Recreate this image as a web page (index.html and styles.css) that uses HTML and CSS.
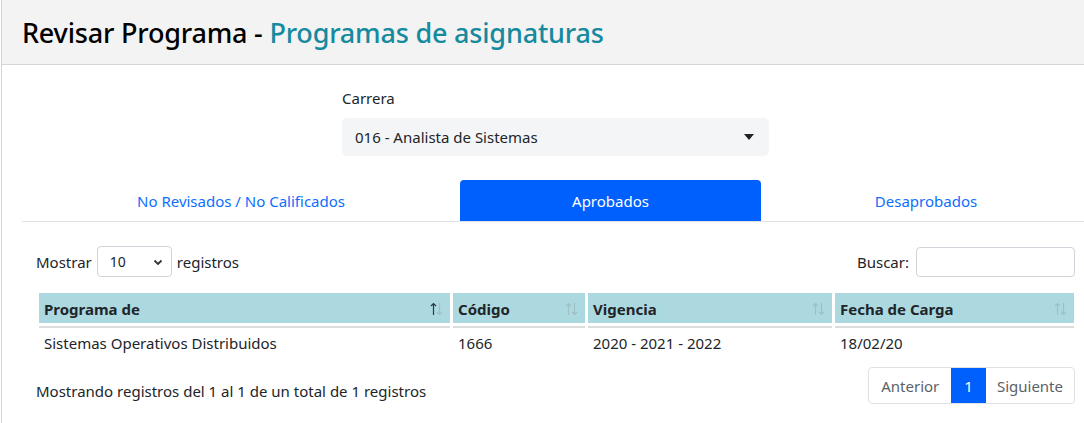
FILE: index.html
```html
<!DOCTYPE html>
<html lang="es">
<head>
<meta charset="utf-8">
<title>Revisar Programa</title>
<link rel="stylesheet" href="styles.css">
</head>
<body>
<div class="card">
  <div class="card-header">
    <h3 class="title">Revisar Programa - <span class="subtitle">Programas de asignaturas</span></h3>
  </div>
  <div class="card-body">
    <div class="filter">
      <label class="filter-label">Carrera</label>
      <div class="fake-select">
        <span>016 - Analista de Sistemas</span>
        <svg class="caret" width="10" height="6" viewBox="0 0 10 6"><path d="M0 0h10L5 6z" fill="#222"/></svg>
      </div>
    </div>
    <ul class="tabs">
      <li class="tab tab-1"><a>No Revisados / No Calificados</a></li>
      <li class="tab tab-2 active"><a>Aprobados</a></li>
      <li class="tab tab-3"><a>Desaprobados</a></li>
    </ul>
    <div class="dt">
      <div class="dt-top">
        <div class="dt-length">
          <span>Mostrar</span>
          <div class="small-select"><span>10</span>
            <svg width="10" height="8" viewBox="0 0 10 8"><path d="M1.5 2.5L5 6l3.5-3.5" fill="none" stroke="#333" stroke-width="1.8"/></svg>
          </div>
          <span>registros</span>
        </div>
        <div class="dt-search">
          <span>Buscar:</span>
          <div class="search-input"></div>
        </div>
      </div>
      <table class="grid">
        <thead>
          <tr>
            <th class="c1"><div class="th-in"><span>Programa de</span><svg class="sort" width="13" height="14" viewBox="0 0 13 14"><path d="M3.5 13V1.5M1 4l2.5-2.5L6 4" fill="none" stroke="#2b3a42" stroke-width="1.2"/><path d="M9.5 1v11.5M7 10l2.5 2.5L12 10" fill="none" stroke="#9fbfc5" stroke-width="1.2"/></svg></div></th>
            <th class="c2"><div class="th-in"><span>Código</span><svg class="sort" width="13" height="14" viewBox="0 0 13 14"><path d="M3.5 13V1.5M1 4l2.5-2.5L6 4" fill="none" stroke="#9fbfc5" stroke-width="1.2"/><path d="M9.5 1v11.5M7 10l2.5 2.5L12 10" fill="none" stroke="#9fbfc5" stroke-width="1.2"/></svg></div></th>
            <th class="c3"><div class="th-in"><span>Vigencia</span><svg class="sort" width="13" height="14" viewBox="0 0 13 14"><path d="M3.5 13V1.5M1 4l2.5-2.5L6 4" fill="none" stroke="#9fbfc5" stroke-width="1.2"/><path d="M9.5 1v11.5M7 10l2.5 2.5L12 10" fill="none" stroke="#9fbfc5" stroke-width="1.2"/></svg></div></th>
            <th class="c4"><div class="th-in"><span>Fecha de Carga</span><svg class="sort" width="13" height="14" viewBox="0 0 13 14"><path d="M3.5 13V1.5M1 4l2.5-2.5L6 4" fill="none" stroke="#9fbfc5" stroke-width="1.2"/><path d="M9.5 1v11.5M7 10l2.5 2.5L12 10" fill="none" stroke="#9fbfc5" stroke-width="1.2"/></svg></div></th>
          </tr>
        </thead>
        <tbody>
          <tr>
            <td>Sistemas Operativos Distribuidos</td>
            <td>1666</td>
            <td>2020 - 2021 - 2022</td>
            <td>18/02/20</td>
          </tr>
        </tbody>
      </table>
      <div class="dt-bottom">
        <div class="dt-info">Mostrando registros del 1 al 1 de un total de 1 registros</div>
        <div class="pager">
          <span class="pg">Anterior</span>
          <span class="pg current">1</span>
          <span class="pg">Siguiente</span>
        </div>
      </div>
    </div>
  </div>
</div>
</body>
</html>
```

FILE: styles.css
```css
html, body {
  margin: 0;
  padding: 0;
  background: #fff;
  overflow: hidden;
}
body {
  font-family: "Noto Sans", "Open Sans", sans-serif;
  color: #212529;
  font-size: 15px;
}
.card {
  margin-left: 1px;
  border-left: 1px solid #d4d4d4;
  height: 423px;
}
.card-header {
  background: #f3f3f3;
  border-bottom: 1px solid #d6d6d6;
  height: 64px;
  display: flex;
  align-items: center;
  padding-left: 20px;
}
.title {
  margin: 0;
  font-size: 27px;
  font-weight: 500;
  color: #000;
  letter-spacing: -0.2px;
}
.subtitle {
  color: #168a9e;
}
.card-body {
  padding-top: 23px;
}
.filter {
  margin-left: 340px;
  width: 427px;
}
.filter-label {
  display: block;
  font-size: 15px;
  line-height: 20px;
  margin-bottom: 10px;
}
.fake-select {
  height: 38px;
  background: #f4f5f7;
  border-radius: 5px;
  display: flex;
  align-items: center;
  justify-content: space-between;
  padding: 0 15px 0 13px;
  font-size: 15px;
}
.tabs {
  list-style: none;
  margin: 24px 0 0 20px;
  padding: 0;
  display: flex;
  border-bottom: 1px solid #dee2e6;
  height: 41px;
}
.tab {
  display: flex;
  align-items: center;
  justify-content: center;
  font-size: 15px;
  color: #0d6efd;
  padding-top: 1px;
}
.tab-1 { flex: 0 0 438px; }
.tab-2 { flex: 0 0 301px; }
.tab-3 { flex: 0 0 330px; }
.tab.active {
  background: #0060fe;
  color: #fff;
  border-radius: 4px 4px 0 0;
}
.dt {
  padding: 0 9px 0 34px;
}
.dt-top {
  display: flex;
  justify-content: space-between;
  align-items: center;
  margin-top: 24px;
  height: 31px;
}
.dt-length, .dt-search {
  display: flex;
  align-items: center;
  gap: 5px;
}
.small-select {
  width: 75px;
  height: 31px;
  box-sizing: border-box;
  border: 1px solid #ced4da;
  border-radius: 4px;
  display: flex;
  align-items: center;
  justify-content: space-between;
  padding: 0 8px 0 12px;
  font-size: 14px;
}
.dt-search { gap: 7px; }
.search-input {
  width: 159px;
  height: 30px;
  box-sizing: border-box;
  border: 1px solid #ced4da;
  border-radius: 4px;
}
.grid {
  margin-top: 16px;
  border-collapse: separate;
  border-spacing: 3px 0;
  width: 1041px;
}
.grid th {
  background: #acd9e0;
  text-align: left;
  font-weight: 700;
  font-size: 15px;
  height: 35px;
  padding: 0 7px 1px 5px;
  border-bottom: 2px solid #dcdcdc;
  box-shadow: inset 0 -3px 0 #fff;
  box-sizing: border-box;
}
.th-in {
  display: flex;
  justify-content: space-between;
  align-items: center;
}
.c1 { width: 411px; }
.c2 { width: 132px; }
.c3 { width: 244px; }
.c4 { width: 239px; }
.sort {
  display: block;
  flex: none;
}
.grid td {
  padding: 4px 5px 9px;
  font-size: 15px;
  height: 21px;
}
.dt-bottom {
  display: flex;
  justify-content: space-between;
  align-items: flex-start;
  margin-top: 5px;
}
.dt-info {
  font-size: 15px;
  padding-top: 14px;
}
.pager {
  display: flex;
  border: 1px solid #dee2e6;
  border-radius: 4px;
  height: 37px;
  box-sizing: border-box;
}
.pg {
  display: flex;
  align-items: center;
  padding: 0 11px;
  font-size: 15px;
  color: #5a6268;
}
.pg:first-child { padding: 0 12px; }
.pg.current {
  background: #0060fe;
  color: #fff;
  padding: 0 13px;
}
```
